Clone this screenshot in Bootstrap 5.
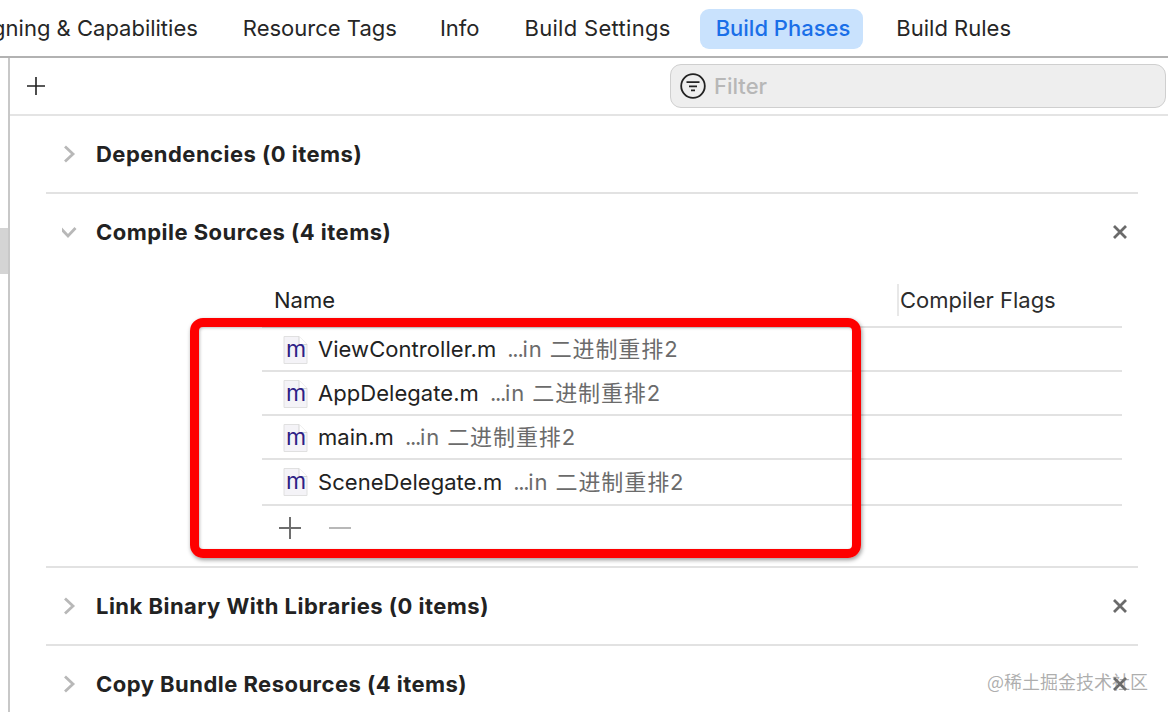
<!doctype html>
<html lang="en">
<head>
<meta charset="utf-8">
<title>Build Phases</title>
<link href="https://cdn.jsdelivr.net/npm/bootstrap@5.3.0/dist/css/bootstrap.min.css" rel="stylesheet">
<style>
html,body{height:712px;overflow:hidden;background:#fff}
body{font-family:Inter,"Noto Sans CJK SC",sans-serif;color:#222;position:relative}
.tabbar{height:58px;border-bottom:2px solid #b2b2b2;padding-right:141px;padding-top:9px;overflow:hidden;gap:13px}
.tabitem{height:40px;line-height:39px;padding:0 16px;font-size:22px;white-space:nowrap;border-radius:9px;flex:none;color:#262626}
.tabitem.on{background:#c9e2fd;color:#1a6fe8;font-weight:500;padding:0 13px 0 16px;margin-right:4px}
.tabitem.widetab{letter-spacing:.3px}
.tabitem.infotab{margin-left:-2px}
.rail{width:10px;border-right:2px solid #c8c8c8;flex:none;height:654px}
.railmark{width:8px;height:46px;background:#d4d4d4;margin-top:170px}
.toolbar{height:58px;border-bottom:2px solid #e4e4e4;padding-left:17px}
.filterbox{width:496px;height:44px;margin-left:auto;margin-right:2px;background:#eeeeee;border:1px solid #cfcfcf;border-radius:11px;padding-left:9px;color:#b7b7b7;font-size:22px;font-weight:500;gap:8px}
.phase{margin:0 30px 0 36px;border-bottom:2px solid #e2e2e2}
.phasehead{height:76px;font-size:22px;letter-spacing:.47px;font-weight:700;color:#222}
.caret{width:50px;flex:none}
.caret svg{display:block}
.closer{margin-left:auto;margin-right:10px}
.filetable{margin-left:216px;margin-right:16px;padding-bottom:16px;font-size:22px}
.tablehead{height:58px;border-bottom:2px solid #e2e2e2;padding-top:4px}
.namecol{width:635px;padding-left:12px;flex:none}
.flagcol{border-left:2px solid #e8e8e8;height:32px;line-height:32px;padding-left:1px;color:#2c2c2c}
.filerow{height:44px;border-bottom:2px solid #e2e2e2;padding-left:21px;padding-top:1px}
.filerow.tall{height:46px;padding-top:0}
.filename{margin-left:9px;color:#222;letter-spacing:.05px}
.filepath{margin-left:11px;color:#6b6b6b;letter-spacing:.9px}
.dots{letter-spacing:-1.300px}
.fileglyph{font-family:Inter,sans-serif;font-size:23px;fill:#2f1f86}
.addrow{height:44px;padding-left:17px;gap:28px}
.highlightbox{position:absolute;left:190px;top:318px;width:671px;height:240px;border:9px solid #fe0000;border-radius:13px;box-shadow:1px 2px 4px rgba(0,0,0,.4),inset 1px 1px 3px rgba(0,0,0,.25)}
.watermark{position:absolute;left:987px;top:669px;font-size:18px;line-height:24px;color:rgba(120,120,120,.6);white-space:nowrap;font-family:"Noto Sans CJK SC",sans-serif}
</style>
</head>
<body>
<div class="tabbar d-flex justify-content-end align-items-start">
  <div class="tabitem">Signing &amp; Capabilities</div>
  <div class="tabitem">Resource Tags</div>
  <div class="tabitem infotab">Info</div>
  <div class="tabitem widetab">Build Settings</div>
  <div class="tabitem on">Build Phases</div>
  <div class="tabitem">Build Rules</div>
</div>
<div class="d-flex">
  <div class="rail"><div class="railmark"></div></div>
  <div class="flex-grow-1">
    <div class="toolbar d-flex align-items-center">
      <svg width="18" height="18" viewBox="0 0 18 18"><path d="M9 0v18M0 9h18" stroke="#222" stroke-width="1.6"/></svg>
      <div class="filterbox d-flex align-items-center">
        <svg width="26" height="26" viewBox="0 0 26 26"><circle cx="13" cy="13" r="11.8" fill="none" stroke="#222" stroke-width="1.8"/><path d="M6.5 9.2h13M9 13.4h8M11 17.4h4" stroke="#222" stroke-width="1.8"/></svg>
        <span>Filter</span>
      </div>
    </div>
    <div class="phase">
      <div class="phasehead d-flex align-items-center">
        <div class="caret"><svg class="ms-3" width="24" height="18" viewBox="0 0 24 18"><path d="M3 1.500 L11 9 L3 16.500" fill="none" stroke="#b8b8b8" stroke-width="2.800"/></svg></div>
        <span>Dependencies (0 items)</span>
      </div>
    </div>
    <div class="phase">
      <div class="phasehead d-flex align-items-center">
        <div class="caret"><svg class="ms-3" width="24" height="18" viewBox="0 0 24 18"><path d="M-1.500 5 L6 13 L13.500 5" fill="none" stroke="#b8b8b8" stroke-width="2.800"/></svg></div>
        <span>Compile Sources (4 items)</span>
        <svg class="closer" width="16" height="16" viewBox="0 0 16 16"><path d="M2 2 14 14M14 2 2 14" stroke="#6a6a6a" stroke-width="2.800"/></svg>
      </div>
      <div class="filetable">
        <div class="tablehead d-flex align-items-center">
          <div class="namecol">Name</div>
          <div class="flagcol">Compiler Flags</div>
        </div>
        <div class="filerow d-flex align-items-center">
          <svg width="26" height="30" viewBox="0 0 26 30"><path d="M1 1.500h15l8 8v19H1z" fill="#f4f3f7" stroke="#e0e0e0"/><path d="M16 1.500v8h8" fill="#fff" stroke="#d4d4d4"/><text class="fileglyph" x="3" y="21.500">m</text></svg>
          <span class="filename">ViewController.m</span><span class="filepath"><span class="dots">...</span>in 二进制重排2</span>
        </div>
        <div class="filerow d-flex align-items-center">
          <svg width="26" height="30" viewBox="0 0 26 30"><path d="M1 1.500h15l8 8v19H1z" fill="#f4f3f7" stroke="#e0e0e0"/><path d="M16 1.500v8h8" fill="#fff" stroke="#d4d4d4"/><text class="fileglyph" x="3" y="21.500">m</text></svg>
          <span class="filename">AppDelegate.m</span><span class="filepath"><span class="dots">...</span>in 二进制重排2</span>
        </div>
        <div class="filerow d-flex align-items-center">
          <svg width="26" height="30" viewBox="0 0 26 30"><path d="M1 1.500h15l8 8v19H1z" fill="#f4f3f7" stroke="#e0e0e0"/><path d="M16 1.500v8h8" fill="#fff" stroke="#d4d4d4"/><text class="fileglyph" x="3" y="21.500">m</text></svg>
          <span class="filename">main.m</span><span class="filepath"><span class="dots">...</span>in 二进制重排2</span>
        </div>
        <div class="filerow tall d-flex align-items-center">
          <svg width="26" height="30" viewBox="0 0 26 30"><path d="M1 1.500h15l8 8v19H1z" fill="#f4f3f7" stroke="#e0e0e0"/><path d="M16 1.500v8h8" fill="#fff" stroke="#d4d4d4"/><text class="fileglyph" x="3" y="21.500">m</text></svg>
          <span class="filename">SceneDelegate.m</span><span class="filepath"><span class="dots">...</span>in 二进制重排2</span>
        </div>
        <div class="addrow d-flex align-items-center">
          <svg width="22" height="22" viewBox="0 0 22 22"><path d="M11 0v22M0 11h22" stroke="#6e6e6e" stroke-width="2"/></svg>
          <svg width="22" height="22" viewBox="0 0 22 22"><path d="M0 11h22" stroke="#b8b8b8" stroke-width="2"/></svg>
        </div>
      </div>
    </div>
    <div class="phase">
      <div class="phasehead d-flex align-items-center">
        <div class="caret"><svg class="ms-3" width="24" height="18" viewBox="0 0 24 18"><path d="M3 1.500 L11 9 L3 16.500" fill="none" stroke="#b8b8b8" stroke-width="2.800"/></svg></div>
        <span>Link Binary With Libraries (0 items)</span>
        <svg class="closer" width="16" height="16" viewBox="0 0 16 16"><path d="M2 2 14 14M14 2 2 14" stroke="#6a6a6a" stroke-width="2.800"/></svg>
      </div>
    </div>
    <div class="phase border-0">
      <div class="phasehead d-flex align-items-center">
        <div class="caret"><svg class="ms-3" width="24" height="18" viewBox="0 0 24 18"><path d="M3 1.500 L11 9 L3 16.500" fill="none" stroke="#b8b8b8" stroke-width="2.800"/></svg></div>
        <span>Copy Bundle Resources (4 items)</span>
        <svg class="closer" width="16" height="16" viewBox="0 0 16 16"><path d="M2 2 14 14M14 2 2 14" stroke="#6a6a6a" stroke-width="2.800"/></svg>
      </div>
    </div>
  </div>
</div>
<div class="highlightbox"></div>
<div class="watermark">@稀土掘金技术社区</div>
<script src="https://cdn.jsdelivr.net/npm/bootstrap@5.3.0/dist/js/bootstrap.bundle.min.js"></script>
</body>
</html>
